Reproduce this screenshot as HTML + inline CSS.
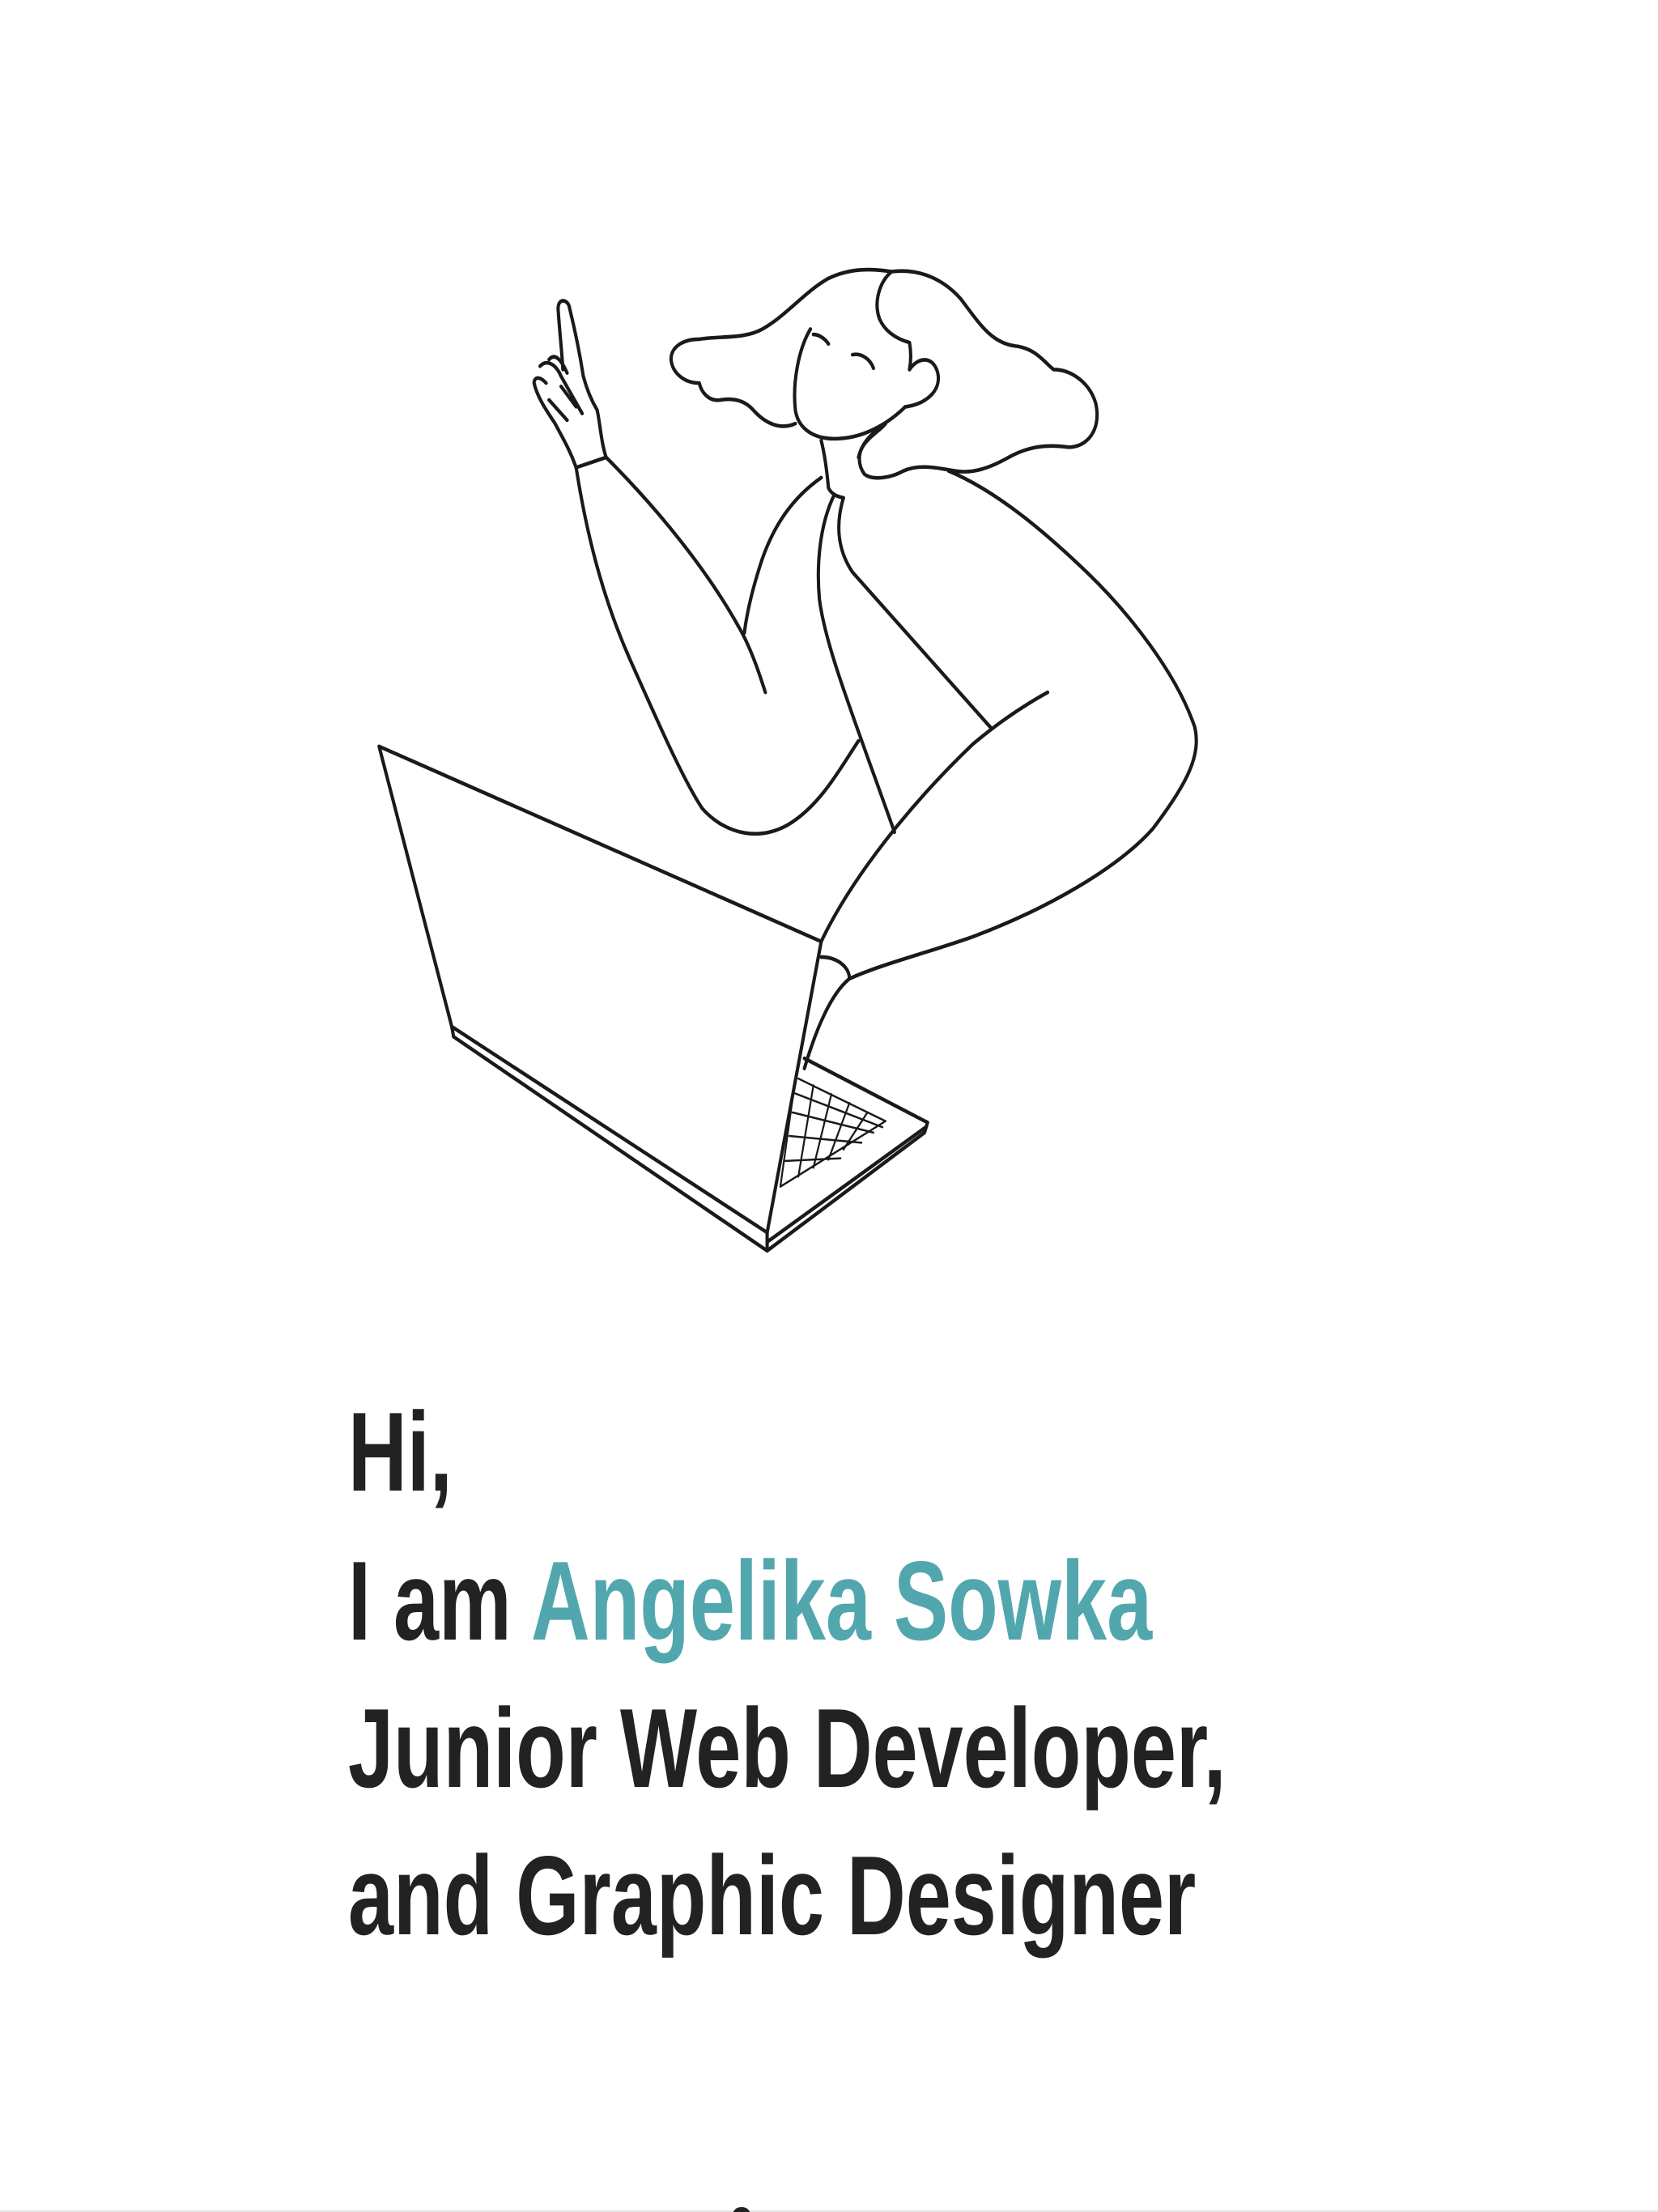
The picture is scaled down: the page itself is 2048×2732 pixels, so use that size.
<!DOCTYPE html>
<html><head><meta charset="utf-8"><style>
html,body{margin:0;padding:0;background:#fff;width:2048px;height:2732px;overflow:hidden;position:relative}
.l{position:absolute;left:430px;font-family:"Liberation Sans",sans-serif;font-weight:bold;font-size:139px;line-height:1;color:#222;white-space:nowrap;transform:scaleX(0.725);transform-origin:0 0}
.t{color:#52a7ae}
svg{position:absolute;left:0;top:0}
</style></head><body>
<svg width="2048" height="2732" viewBox="0 0 2048 2732">
<g transform="translate(400,298) scale(0.742,0.834)" fill="none" stroke="#1a1a1a" stroke-width="5.5" stroke-linecap="round" stroke-linejoin="round">
<path d="M92,748 L828,1037 L738,1468 L213,1163 Z"/>
<path d="M213,1163 L216,1178 L738,1495 L738,1468"/>
<path d="M800,1210 L1005,1305 L1000,1320 L738,1495"/>
<path d="M738,1482 L1002,1312"/>
<g stroke-width="3">
<path d="M790,1240 L935,1303 M780,1290 L915,1320 M785,1262 L930,1312"/>
<path d="M785,1240 L760,1400 M935,1303 L760,1400 M775,1325 L895,1335 M768,1362 L860,1358"/>
<path d="M815,1250 L790,1385 M845,1263 L815,1372 M875,1276 L840,1360 M905,1290 L865,1345"/>
</g>
<path d="M828,1060 C855,1060 875,1075 875,1092 C850,1110 825,1150 800,1225"/>
<path d="M1040,340 C1120,370 1200,430 1270,490 C1340,550 1420,640 1450,720 C1460,760 1440,800 1380,870 C1320,930 1200,990 1080,1030 C1000,1055 930,1070 875,1092"/>
<path d="M1205,668 C1160,690 1120,715 1080,745 C980,830 880,940 828,1037"/>
<path d="M865,380 C855,410 850,450 880,490 C960,570 1040,650 1110,720"/>
<path d="M850,375 C825,420 820,480 825,530 C835,600 880,700 950,875"/>
<path d="M420,335 C435,420 460,520 510,620 C560,720 600,800 630,840 C670,880 730,890 780,860 C830,830 860,780 890,740"/>
<path d="M470,320 C560,400 640,490 690,570 C710,600 725,640 735,668"/>
<path d="M828,350 C780,380 750,420 730,470 C715,510 705,545 700,580"/>
<path d="M420,335 L470,320 C462,300 460,270 455,250 C445,235 438,220 432,200 C425,160 415,120 408,95 C403,85 390,85 390,100 C392,130 396,160 398,190"/>
<path d="M420,335 C410,310 400,295 385,270 C370,250 355,230 350,210 C350,200 360,200 370,210 M360,185 C370,175 385,180 395,200 L430,255 M375,175 C385,165 395,175 405,195 M375,235 L405,265 M395,215 L420,245"/>
<path d="M828,295 C835,320 838,345 840,365 C845,375 855,378 865,380"/>
<path d="M935,270 C910,285 895,300 890,320"/>
<path d="M810,130 C790,160 780,210 785,250 C790,280 820,295 860,292 C900,290 940,270 968,245"/>
<path d="M975,190 C990,170 1015,170 1022,195 C1028,220 1005,240 970,245"/>
<path d="M815,138 C825,138 835,145 840,152"/>
<path d="M880,168 C895,165 910,175 915,188"/>
<path d="M785,270 C760,280 735,270 715,250 C700,235 680,232 660,235 C640,238 628,222 625,210 C600,210 580,195 578,175 C578,155 600,145 625,145 C660,140 700,145 730,130 C770,110 800,75 840,55 C875,40 910,40 945,45"/>
<path d="M945,45 C925,60 915,90 925,115 C935,135 955,145 975,150 C978,165 977,180 975,190"/>
<path d="M945,45 C990,40 1030,55 1060,85 C1090,120 1110,150 1150,155 C1185,158 1200,180 1215,190 C1245,190 1275,210 1285,240 C1295,280 1270,305 1240,305 C1200,300 1170,305 1140,320 C1110,335 1080,345 1050,340 C1020,335 990,330 965,340 C945,350 915,355 900,345 C888,330 888,310 905,295 C915,285 928,278 935,270"/>
</g>
</svg>
<div class="l" style="top:1724px">Hi,</div>
<div class="l" style="top:1908px">I am <span class="t">Angelika Sowka</span></div>
<div class="l" style="top:2090px">Junior Web Developer,</div>
<div class="l" style="top:2272px">and Graphic Designer</div>
<div style="position:absolute;left:0;top:2730px;width:2048px;height:2px;background:#e6e6e6"></div>
<div style="position:absolute;left:905px;top:2726px;width:22px;height:10px;border-radius:11px 11px 0 0;background:#222"></div>
</body></html>
